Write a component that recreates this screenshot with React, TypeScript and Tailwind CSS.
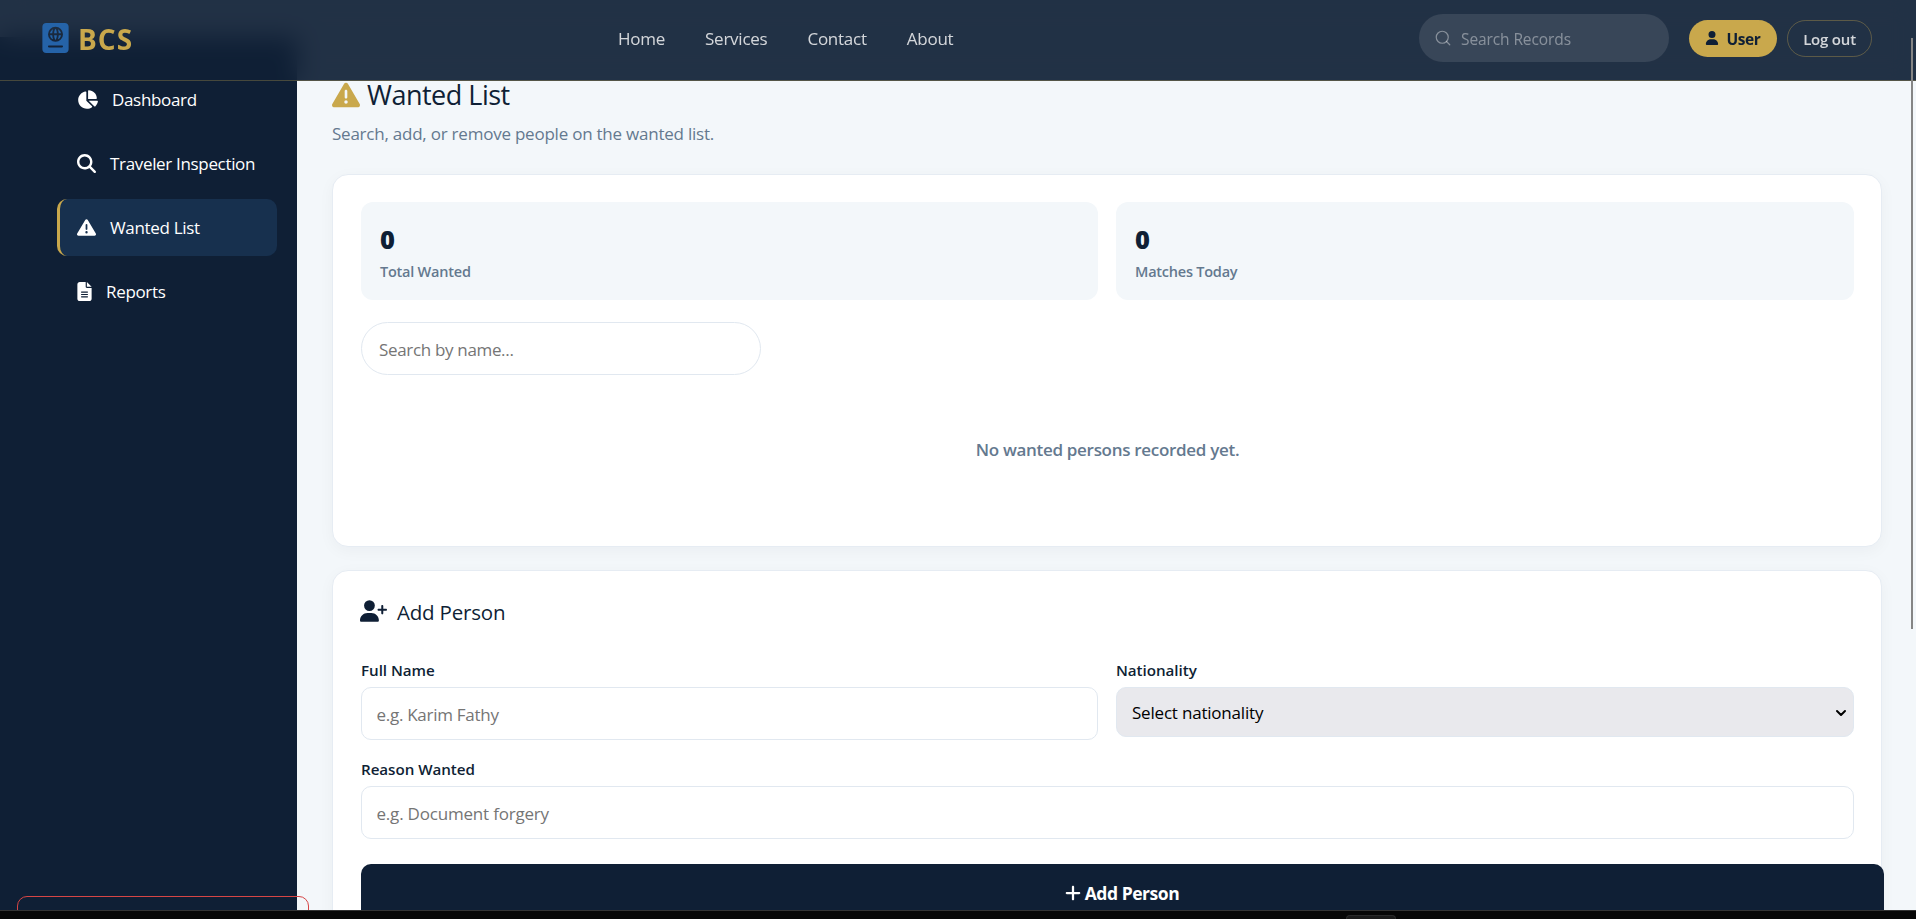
import { ReactNode } from "react";
import {
  FaChartPie,
  FaFileLines,
  FaMagnifyingGlass,
  FaPassport,
  FaPlus,
  FaTriangleExclamation,
  FaUser,
  FaUserPlus,
} from "react-icons/fa6";
import { ChevronDown, Search } from "lucide-react";

interface SidebarItemProps {
  icon: ReactNode;
  label: string;
  active?: boolean;
}

const SidebarItem: React.FC<SidebarItemProps> = ({ icon, label, active }) => (
  <a
    className={`flex h-[57px] w-[220px] cursor-pointer items-center gap-[14px] rounded-[10px] border-l-[3px] pl-[17px] text-[17px] tracking-[-0.33px] whitespace-nowrap text-white ${
      active ? "border-[#c9a84c] bg-[#17304e]" : "border-transparent"
    }`}
  >
    <span className="text-[19px]">{icon}</span>
    <span className="pt-px">{label}</span>
  </a>
);

const StatBox: React.FC<{ value: number; label: string }> = ({
  value,
  label,
}) => (
  <div className="h-[98px] rounded-xl bg-[#f3f7fa] px-[19px] pt-[21px]">
    <p className="text-[25.5px] leading-[32px] font-extrabold text-[#0f1f35]">
      {value}
    </p>
    <p className="mt-[6px] text-[14.5px] leading-[22px] font-semibold tracking-[-0.23px] text-[#64798f]">
      {label}
    </p>
  </div>
);

const Header = () => (
  <header className="absolute inset-x-0 top-0 z-20 flex h-[81px] items-center border-b border-[#c9a84c]/30 bg-[#0f1f35]/92 pb-[4px] pl-[42px] backdrop-blur-[12px]">
    <div className="flex w-[576px] items-center gap-[9px]">
      <FaPassport className="h-[30px] w-[27px] text-[#2563a8]" />
      <span className="pt-[2px] text-[28px] leading-none font-bold tracking-[1px] text-[#c9a84c]">
        BCS
      </span>
    </div>
    <nav className="flex w-[801px] gap-10 pt-px text-[17px] tracking-[-0.25px] text-white/80">
      <a>Home</a>
      <a>Services</a>
      <a>Contact</a>
      <a>About</a>
    </nav>
    <div className="flex h-12 w-[250px] items-center gap-[9px] rounded-full bg-white/10 pl-[15px] text-white/40">
      <Search size={18} strokeWidth={1.6} />
      <span className="pt-[3px] text-[15.5px] tracking-[-0.1px]">
        Search Records
      </span>
    </div>
    <button className="ml-5 flex h-[37px] w-[88px] items-center justify-center gap-[7px] rounded-full bg-[#c9a84c] text-[15.5px] font-bold tracking-[-0.4px] text-[#0f1f35]">
      <FaUser size={14} />
      <span className="pt-[3px]">User</span>
    </button>
    <button className="ml-[10px] h-[37px] w-[85px] rounded-full border border-[#c9a84c]/35 pt-[2px] text-[15px] font-semibold tracking-[-0.2px] text-white/80">
      Log out
    </button>
  </header>
);

const Sidebar = () => (
  <aside className="relative z-10 mt-[37px] w-[297px] shrink-0 bg-[#0f1f35] pt-[34px] pl-[57px]">
    <div className="flex flex-col gap-[7px]">
      <SidebarItem icon={<FaChartPie className="w-[21px]" />} label="Dashboard" />
      <SidebarItem icon={<FaMagnifyingGlass />} label="Traveler Inspection" />
      <SidebarItem icon={<FaTriangleExclamation />} label="Wanted List" active />
      <SidebarItem icon={<FaFileLines className="w-[15px]" />} label="Reports" />
    </div>
    <button className="absolute top-[859px] left-[17px] h-[50px] w-[292px] rounded-[10px] border border-[#d64545]" />
  </aside>
);

const WantedCard = () => (
  <section className="h-[373px] rounded-2xl border border-[#e6ecf3] bg-white pt-[27px] pr-[27px] pl-7 shadow-[0_4px_16px_rgba(15,31,53,0.04)]">
    <div className="grid grid-cols-[737px_738px] gap-[18px]">
      <StatBox value={0} label="Total Wanted" />
      <StatBox value={0} label="Matches Today" />
    </div>
    <input
      className="mt-[22px] block h-[53px] w-[400px] rounded-full border border-[#e1e8f0] px-[17px] pt-[2px] text-[17px] tracking-[-0.33px] placeholder:text-[#757575]"
      placeholder="Search by name..."
    />
    <p className="mt-[62px] text-center text-[17px] leading-[26px] font-semibold tracking-[-0.3px] text-[#64798f]">
      No wanted persons recorded yet.
    </p>
  </section>
);

const AddPersonCard = () => (
  <section className="mt-[23px] h-[420px] rounded-2xl border border-[#e6ecf3] bg-white pt-[25px] pr-[27px] pl-7 shadow-[0_4px_16px_rgba(15,31,53,0.04)]">
    <h2 className="flex h-8 items-center gap-[10px] text-[20.5px] tracking-[-0.2px] text-[#0f1f35]">
      <FaUserPlus className="mb-[3px] ml-[-1px] h-[22px] w-[27px]" />
      Add Person
    </h2>
    <div className="mt-[31px] grid grid-cols-[737px_738px] gap-[18px]">
      <div>
        <label className="block h-[28px] text-[15.2px] leading-[22px] font-semibold tracking-[-0.05px] text-[#0f1f35]">
          Full Name
        </label>
        <input
          className="block h-[53px] w-full rounded-[10px] border border-[#e1e8f0] px-[14.5px] pt-[2px] text-[17px] tracking-[-0.28px] placeholder:text-[#757575]"
          placeholder="e.g. Karim Fathy"
        />
      </div>
      <div>
        <label className="block h-[28px] text-[15.2px] leading-[22px] font-semibold tracking-[-0.05px] text-[#0f1f35]">
          Nationality
        </label>
        <div className="flex h-[50px] items-center justify-between rounded-[10px] border border-[#e1e8f0] bg-[#e9e9ed] pr-[4px] pl-[15px] text-[17px] tracking-[-0.2px] text-black">
          <span className="pt-[2px]">Select nationality</span>
          <ChevronDown size={16} strokeWidth={3} className="mt-[2px]" />
        </div>
      </div>
    </div>
    <label className="mt-[18px] block h-[28px] text-[15.2px] leading-[22px] font-semibold tracking-[-0.05px] text-[#0f1f35]">
      Reason Wanted
    </label>
    <input
      className="block h-[53px] w-full rounded-[10px] border border-[#e1e8f0] px-[14.5px] pt-[2px] text-[17px] tracking-[-0.2px] placeholder:text-[#757575]"
      placeholder="e.g. Document forgery"
    />
    <button className="mt-[25px] flex h-[58px] w-[1523px] items-center justify-center gap-[3px] rounded-[10px] bg-[#0f1f35] pr-[2px] text-[17.5px] font-bold tracking-[-0.45px] text-white">
      <FaPlus size={18} />
      <span>Add Person</span>
    </button>
  </section>
);

const App = () => {
  return (
    <div className="h-[919px] overflow-hidden bg-[#f3f7fa] font-['Open_Sans','Noto_Sans',sans-serif]">
      <div className="relative flex h-[910px] overflow-hidden">
        <Header />
        <Sidebar />
        <main className="w-[1585px] shrink-0 pt-[78px] pl-[35px]">
          <h1 className="flex h-[34px] items-center gap-[7px] text-[27px] tracking-[-0.5px] text-[#0f1f35]">
            <FaTriangleExclamation className="mb-px h-[28px] w-[28px] text-[#c9a84c]" />
            Wanted List
          </h1>
          <p className="mt-[9px] mb-[27px] text-[17px] leading-[26px] tracking-[-0.23px] text-[#64798f]">
            Search, add, or remove people on the wanted list.
          </p>
          <WantedCard />
          <AddPersonCard />
        </main>
        <div className="absolute top-[38px] right-[3px] z-30 h-[591px] w-[2px] bg-[#858585]" />
      </div>
      <footer className="h-[9px] border-t border-[#333333] bg-[#060606] pt-[4px]">
        <div className="ml-[1346px] h-[4px] w-[50px] rounded-t-[4px] border border-b-0 border-[#2a2a2a] bg-[#1a1a1a]" />
      </footer>
    </div>
  );
};

export default App;
